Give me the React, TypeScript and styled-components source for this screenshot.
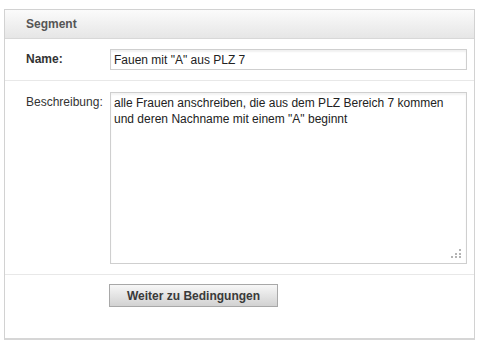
import styled, { createGlobalStyle } from 'styled-components';

const GlobalStyle = createGlobalStyle`
    body {
        margin: 0;
        background: #ffffff;
        font-family: 'Liberation Sans', Arial, sans-serif;
        font-size: 12px;
        color: #333333;
    }
`;

type RowPropsType = {
    paddingTop: string;
    paddingBottom: string;
    last?: boolean;
};

type LabelPropsType = {
    bold?: boolean;
};

// resize grip dots: [x, y]
const gripDots = [
    [8, 0],
    [4, 4],
    [8, 4],
    [0, 7],
    [4, 7],
    [8, 7],
];

function App() {
    return (
        <>
            <GlobalStyle />
            <Panel>
                <Header>Segment</Header>
                <Row paddingTop={'10px'} paddingBottom={'10px'}>
                    <Label bold>Name:</Label>
                    <TextInput type="text" defaultValue={'Fauen mit "A" aus PLZ 7'} />
                </Row>
                <Row paddingTop={'11px'} paddingBottom={'10px'}>
                    <Label>Beschreibung:</Label>
                    <AreaWrap>
                        <TextArea
                            defaultValue={
                                'alle Frauen anschreiben, die aus dem PLZ Bereich 7 kommen und deren Nachname mit einem "A" beginnt'
                            }
                        />
                        <Grip width="10" height="9" viewBox="0 0 10 9">
                            {gripDots.map(([x, y]) => (
                                <rect key={`${x}-${y}`} x={x} y={y} width="2" height="2" fill="#b4b4b4" />
                            ))}
                        </Grip>
                    </AreaWrap>
                </Row>
                <Row paddingTop={'9px'} paddingBottom={'31px'} last>
                    <Label />
                    <Button>Weiter zu Bedingungen</Button>
                </Row>
            </Panel>
        </>
    );
}

export default App;

const Panel = styled.div`
    box-sizing: border-box;
    width: 471px;
    margin: 9px 0 0 4px;
    border: 1px solid #d2d2d2;
    border-bottom: 2px solid #d6d6d6;
    background: #ffffff;
`;

const Header = styled.div`
    box-sizing: border-box;
    height: 29px;
    padding: 0 0 0 21px;
    display: flex;
    align-items: center;
    font-weight: bold;
    font-size: 12px;
    color: #555555;
    background: linear-gradient(to bottom, #fbfbfb 0%, #e6e6e6 100%);
    border-bottom: 1px solid #d8d8d8;
`;

const Row = styled.div<RowPropsType>`
    display: flex;
    align-items: flex-start;
    padding: ${(props) => props.paddingTop} 0 ${(props) => props.paddingBottom} 21px;
    border-bottom: ${(props) => (props.last ? 'none' : '1px solid #e8e8e8')};
`;

const Label = styled.div<LabelPropsType>`
    width: 84px;
    flex-shrink: 0;
    padding-top: 3px;
    font-weight: ${(props) => (props.bold ? 'bold' : 'normal')};
    color: #333333;
    line-height: 15px;
`;

const TextInput = styled.input`
    box-sizing: border-box;
    width: 357px;
    height: 21px;
    margin: 0;
    padding: 0 3px;
    border: 1px solid #cfcfcf;
    box-shadow: inset 0 2px 2px rgba(0, 0, 0, 0.06);
    font-family: 'Liberation Sans', Arial, sans-serif;
    font-size: 12px;
    color: #222222;
    outline: none;
`;

const AreaWrap = styled.div`
    position: relative;
    width: 357px;
    height: 172px;
`;

const TextArea = styled.textarea`
    display: block;
    box-sizing: border-box;
    width: 357px;
    height: 172px;
    margin: 0;
    padding: 2px 3px;
    border: 1px solid #cfcfcf;
    box-shadow: inset 0 2px 2px rgba(0, 0, 0, 0.05);
    font-family: 'Liberation Sans', Arial, sans-serif;
    font-size: 12px;
    line-height: 16px;
    color: #222222;
    outline: none;
    resize: none;
`;

const Grip = styled.svg`
    position: absolute;
    right: 6px;
    bottom: 6px;
    pointer-events: none;
`;

const Button = styled.button`
    box-sizing: border-box;
    width: 169px;
    height: 23px;
    margin: 0 0 0 -1px;
    padding: 0;
    border: 1px solid #a8a8a8;
    background: linear-gradient(to bottom, #f7f7f7 0%, #e4e4e4 50%, #d2d2d2 100%);
    font-family: 'Liberation Sans', Arial, sans-serif;
    font-size: 12px;
    font-weight: bold;
    color: #3a3a3a;
    cursor: pointer;
`;
